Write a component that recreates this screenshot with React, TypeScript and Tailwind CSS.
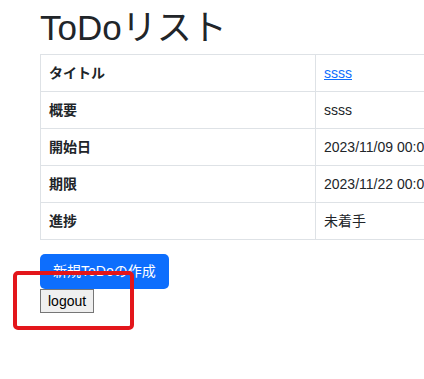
const rows = [
  { label: 'タイトル', value: 'ssss', link: true },
  { label: '概要', value: 'ssss' },
  { label: '開始日', value: '2023/11/09 00:00' },
  { label: '期限', value: '2023/11/22 00:00' },
  { label: '進捗', value: '未着手' },
]

export default function App() {
  return (
    <div
      className="relative w-[424px] h-[379px] overflow-hidden bg-white text-[#212529]"
      style={{ fontFamily: '"Liberation Sans", "Noto Sans CJK JP", sans-serif' }}
    >
      <div className="pl-10">
        <h1 className="mt-[7px] mb-[5px] text-[35px] leading-[42px] font-normal whitespace-nowrap">ToDoリスト</h1>

        <table className="table-fixed w-[520px] border-collapse text-[14px] leading-[20px]">
          <colgroup>
            <col className="w-[275px]" />
            <col />
          </colgroup>
          <tbody>
            {rows.map((row) => (
              <tr key={row.label}>
                <th className="border border-[#dee2e6] px-2 py-2 text-left font-bold">{row.label}</th>
                <td className="border border-[#dee2e6] px-2 py-2 whitespace-nowrap">
                  {row.link ? (
                    <a href="#" className="text-[#0d6efd] underline">{row.value}</a>
                  ) : (
                    row.value
                  )}
                </td>
              </tr>
            ))}
          </tbody>
        </table>

        <div className="mt-[14px]">
          <button className="rounded-[5px] border border-transparent bg-[#0d6efd] px-3 py-[6px] text-[14px] leading-[21px] text-white">
            新規ToDoの作成
          </button>
        </div>
        <div>
          <button className="border border-[#767676] bg-[#efefef] px-[7px] py-[1px] text-[14px] leading-[20px] text-black">
            logout
          </button>
        </div>
      </div>

      {/* annotation box */}
      <div className="absolute left-[13px] top-[271px] w-[121px] h-[59px] rounded-[5px] border-4 border-[#e3161b]" />
    </div>
  )
}
